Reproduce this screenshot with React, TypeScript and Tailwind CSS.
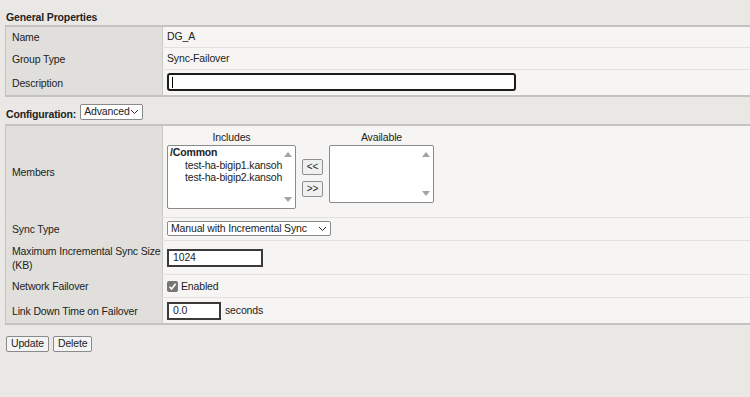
const font = "font-['Liberation_Sans',Arial,sans-serif]";

function Row({
  label,
  children,
  h,
  last,
}: {
  label: React.ReactNode;
  children: React.ReactNode;
  h: string;
  last?: boolean;
}) {
  return (
    <div className={`flex ${h} ${last ? "" : "border-b border-[#e2e1dd]"}`}>
      <div className="w-[157px] shrink-0 bg-[#e0dfdb] border-r border-[#c9c8c4] flex items-center pl-[6px] leading-[14px]">
        {label}
      </div>
      <div className="flex-1 bg-[#f6f5f3] flex items-center pl-[4px]">{children}</div>
    </div>
  );
}

function Chevron() {
  return (
    <svg width="9" height="6" viewBox="0 0 9 6" className="ml-auto mr-[3px]">
      <path d="M1 1 L4.5 4.5 L8 1" fill="none" stroke="#333" strokeWidth="1" />
    </svg>
  );
}

function ScrollArrows() {
  return (
    <div className="absolute right-[2px] top-[2px] bottom-[2px] w-[11px] flex flex-col justify-between items-center py-[4px]">
      <div className="w-0 h-0 border-l-[4px] border-r-[4px] border-b-[5px] border-l-transparent border-r-transparent border-b-[#a3a3a3]" />
      <div className="w-0 h-0 border-l-[4px] border-r-[4px] border-t-[5px] border-l-transparent border-r-transparent border-t-[#a3a3a3]" />
    </div>
  );
}

function SmallBtn({ children }: { children: React.ReactNode }) {
  return (
    <div className="w-[21px] h-[16px] border border-[#8f8f8f] rounded-[2px] bg-[#f0f0f0] text-[10px] flex items-center justify-center leading-none">
      {children}
    </div>
  );
}

export default function App() {
  return (
    <div className={`${font} w-[750px] h-[397px] bg-[#e9e8e4] text-[10.5px] tracking-[-0.15px] text-[#222] overflow-hidden`}>
      <div className="pt-[10px] pl-[6px] h-[25px] font-bold">General Properties</div>
      <div className="ml-[5px] border-t-2 border-b-2 border-l border-[#c4c3bf]">
        <Row label="Name" h="h-[21px]">DG_A</Row>
        <Row label="Group Type" h="h-[22px]">Sync-Failover</Row>
        <Row label="Description" h="h-[25px]" last>
          <div className="w-[349px] h-[18px] -mt-[1px] border-2 border-[#1c1c1c] rounded-[3px] bg-white flex items-center pl-[3px]">
            <div className="w-px h-[11px] bg-black" />
          </div>
        </Row>
      </div>

      <div className="flex items-end h-[27px] pl-[6px]">
        <span className="font-bold mb-[1px]">Configuration:</span>
        <div className="ml-[4px] mb-[4px] w-[63px] h-[16px] border border-[#8a8a8a] rounded-[2px] bg-white flex items-center pl-[3px]">
          Advanced
          <Chevron />
        </div>
      </div>

      <div className="ml-[5px] border-t-2 border-b-2 border-l border-[#c4c3bf]">
        <Row label="Members" h="h-[92px]">
          <div className="flex items-start h-full pt-[4px]">
            <div className="flex flex-col items-center">
              <div className="h-[15px] leading-[14px]">Includes</div>
              <div className="relative w-[129px] h-[64px] border border-[#8a8a8a] rounded-[2px] bg-white pl-[2px] leading-[12.5px]">
                <div className="font-bold">/Common</div>
                <div className="pl-[15px]">test-ha-bigip1.kansoh</div>
                <div className="pl-[15px]">test-ha-bigip2.kansoh</div>
                <ScrollArrows />
              </div>
            </div>
            <div className="flex flex-col gap-[6px] mx-[6px] mt-[29px]">
              <SmallBtn>&lt;&lt;</SmallBtn>
              <SmallBtn>&gt;&gt;</SmallBtn>
            </div>
            <div className="flex flex-col items-center">
              <div className="h-[15px] leading-[14px]">Available</div>
              <div className="relative w-[105px] h-[58px] border border-[#8a8a8a] rounded-[2px] bg-white">
                <ScrollArrows />
              </div>
            </div>
          </div>
        </Row>
        <Row label="Sync Type" h="h-[23px]">
          <div className="w-[164px] h-[15px] -mt-[1px] border border-[#8a8a8a] rounded-[2px] bg-white flex items-center pl-[3px]">
            Manual with Incremental Sync
            <Chevron />
          </div>
        </Row>
        <Row
          label={
            <span>
              Maximum Incremental Sync Size
              <br />
              (KB)
            </span>
          }
          h="h-[34px]"
        >
          <div className="w-[96px] h-[18px] border-2 border-[#3a3a3a] bg-white flex items-center pl-[4px]">1024</div>
        </Row>
        <Row label="Network Failover" h="h-[23px]">
          <div className="flex items-center">
            <div className="w-[11px] h-[11px] rounded-[2px] bg-[#767676] flex items-center justify-center">
              <svg width="9" height="9" viewBox="0 0 9 9">
                <path d="M1.5 4.8 L3.6 7 L7.6 1.8" fill="none" stroke="#fff" strokeWidth="1.6" />
              </svg>
            </div>
            <span className="ml-[3px] mt-[1px]">Enabled</span>
          </div>
        </Row>
        <Row label="Link Down Time on Failover" h="h-[25px]" last>
          <div className="flex items-center">
            <div className="w-[54px] h-[18px] border-2 border-[#3a3a3a] bg-white flex items-center pl-[4px]">0.0</div>
            <span className="ml-[4px]">seconds</span>
          </div>
        </Row>
      </div>

      <div className="flex gap-[4px] pl-[6px] pt-[11px]">
        <div className="h-[16px] px-[4px] border border-[#8a8a8a] rounded-[2px] bg-[#f4f4f4] flex items-center">Update</div>
        <div className="h-[16px] px-[4px] border border-[#8a8a8a] rounded-[2px] bg-[#f4f4f4] flex items-center">Delete</div>
      </div>
    </div>
  );
}
